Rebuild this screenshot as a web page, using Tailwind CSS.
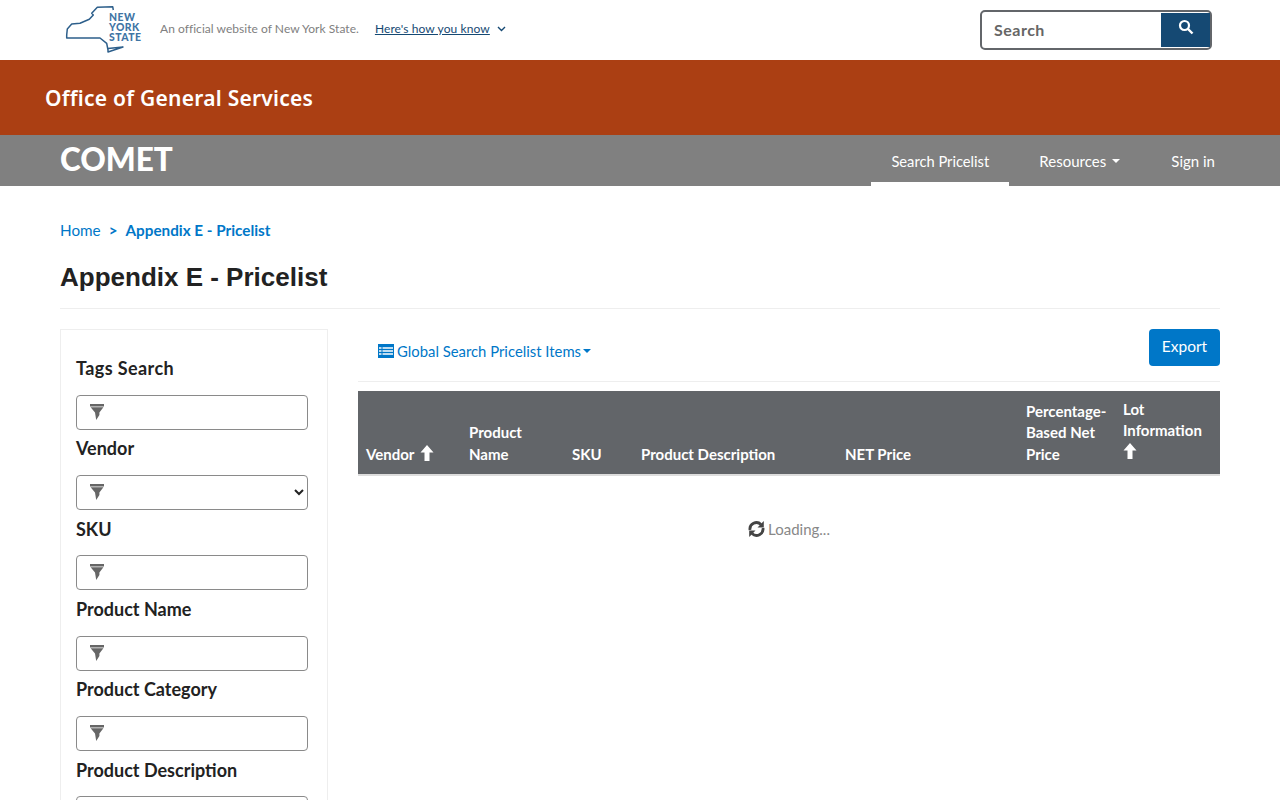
<!DOCTYPE html>
<html lang="en">
<head>
<meta charset="utf-8">
<title>Appendix E - Pricelist</title>
<script src="https://cdn.jsdelivr.net/npm/@tailwindcss/browser@4"></script>
</head>
<body class="bg-white font-['Lato',sans-serif] text-[#222]">
<div class="h-[800px] overflow-hidden">
  <!-- Universal header -->
  <div class="h-[60px] px-[60px] flex items-center justify-between">
    <div class="flex items-center">
      <svg class="w-[90px] h-[60px]" viewBox="0 0 90 60" fill="none">
        <path d="M6.7 35 L7.3 29 L11.7 24 L20 23.3 L29.3 19.3 L33.3 15 L31.7 13.3 L37.3 7.3 L52.7 6.7 L53.3 10 M6.7 35 L6.7 38 L40 38 L46.7 43.3 L48 50 M48 52 L63 47 L48 48.5 Z" stroke="#2d5f8b" stroke-width="1.5" stroke-linejoin="round"/>
        <g fill="#3f75a5" font-family="Lato" font-weight="900" font-size="10.4" letter-spacing="0.5">
          <text x="49" y="20.5">NEW</text>
          <text x="49" y="30.5">YORK</text>
          <text x="49" y="40.5">STATE</text>
        </g>
      </svg>
      <span class="ml-[10px] -mt-[2px] text-[12px] tracking-[0.04px] text-[#808080]">An official website of New York State.</span>
      <a class="ml-[16px] -mt-[2px] text-[12px] tracking-[0.1px] text-[#154973] underline">Here's how you know </a>
      <svg class="ml-[7px] -mt-[2px] w-[9px] h-[6px]" viewBox="0 0 9 6" fill="none"><path d="M1 1 L4.5 4.5 L8 1" stroke="#154973" stroke-width="1.4"/></svg>
    </div>
    <div class="mr-[8px] w-[232px] h-[40px] border-2 border-[#63666a] rounded-[5px] flex items-center justify-between pl-[12px] pr-0">
      <span class="text-[16px] font-bold tracking-[0.5px] text-[#666]">Search</span>
      <button class="w-[49px] h-[34px] bg-[#154973] flex items-start justify-center pt-[6px]">
        <svg class="w-[16px] h-[16px]" viewBox="0 0 16 16" fill="none"><circle cx="6.5" cy="6.5" r="4.5" stroke="white" stroke-width="2.2"/><path d="M10 10 L14.5 14.5" stroke="white" stroke-width="2.4"/></svg>
      </button>
    </div>
  </div>
  <!-- Agency bar -->
  <div class="h-[75px] bg-[#ab3f13] flex items-center pl-[45px] pt-[2px]">
    <span class="font-['Noto_Sans',sans-serif] font-semibold text-[21px] tracking-[0.25px] text-white">Office of General Services</span>
  </div>
  <!-- App nav -->
  <div class="h-[51px] bg-[#808080] px-[60px] flex justify-between text-white">
    <a class="text-[31.5px] leading-[49px] font-black">COMET</a>
    <nav class="flex -mr-[15px] text-[15px] leading-[24px]">
      <a class="w-[138px] text-center h-[51px] pt-[14px] border-b-4 border-white text-[14.7px]">Search Pricelist</a>
      <a class="w-[122px] ml-[10px] pl-[20px] pt-[14px] flex items-start gap-[6px]">Resources <span class="mt-[10px] border-x-4 border-t-4 border-x-transparent border-t-white"></span></a>
      <a class="ml-[10px] px-[20px] pt-[14px]">Sign in</a>
    </nav>
  </div>
  <!-- Main -->
  <main class="px-[60px]">
    <div class="pt-[34px] h-[68px] flex text-[15.25px] text-[#0077c8] leading-[21px]">
      <a>Home</a><b class="mx-[8px]">&gt;</b><b>Appendix E - Pricelist</b>
    </div>
    <h1 class="font-['Liberation_Sans',sans-serif] font-bold text-[26px] leading-[40px] pt-[3px] text-[#222] h-[55px] border-b border-[#eee]">Appendix E - Pricelist</h1>
    <div class="mt-[20px] flex gap-[30px]">
      <!-- Filter sidebar -->
      <aside class="w-[268px] shrink-0 border border-[#eee] pt-[20px] px-[15px] flex flex-col">
        <div class="h-[80.2px]">
          <div class="h-[45px] pt-[5px] text-[18px] leading-[26px] font-bold tracking-[0.4px] text-[#222]">Tags Search</div>
          <div class="relative">
            <input class="block w-[232px] h-[35px] border border-[#8a8a8a] rounded-[4px] bg-white">
            <svg class="absolute left-[14px] top-[9px] w-[14px] h-[16px]" viewBox="0 0 14 16"><path d="M0 0H14V2.4H0Z M0.6 3.2H13.4L9.4 8.6V11L6.2 16L5 8.6Z" fill="#666"/></svg>
          </div>
        </div>
        <div class="h-[80.2px]">
          <div class="h-[45px] pt-[5px] text-[18px] leading-[26px] font-bold text-[#222]">Vendor</div>
          <div class="relative">
            <select class="block w-[232px] h-[35px] border border-[#8a8a8a] rounded-[4px] bg-white"></select>
            <svg class="absolute left-[14px] top-[9px] w-[14px] h-[16px]" viewBox="0 0 14 16"><path d="M0 0H14V2.4H0Z M0.6 3.2H13.4L9.4 8.6V11L6.2 16L5 8.6Z" fill="#666"/></svg>
          </div>
        </div>
        <div class="h-[80.2px]">
          <div class="h-[45px] pt-[6px] text-[18px] leading-[26px] font-bold text-[#222]">SKU</div>
          <div class="relative">
            <input class="block w-[232px] h-[35px] border border-[#8a8a8a] rounded-[4px] bg-white">
            <svg class="absolute left-[14px] top-[9px] w-[14px] h-[16px]" viewBox="0 0 14 16"><path d="M0 0H14V2.4H0Z M0.6 3.2H13.4L9.4 8.6V11L6.2 16L5 8.6Z" fill="#666"/></svg>
          </div>
        </div>
        <div class="h-[80.2px]">
          <div class="h-[45px] pt-[5px] text-[18px] leading-[26px] font-bold text-[#222]">Product Name</div>
          <div class="relative">
            <input class="block w-[232px] h-[35px] border border-[#8a8a8a] rounded-[4px] bg-white">
            <svg class="absolute left-[14px] top-[9px] w-[14px] h-[16px]" viewBox="0 0 14 16"><path d="M0 0H14V2.4H0Z M0.6 3.2H13.4L9.4 8.6V11L6.2 16L5 8.6Z" fill="#666"/></svg>
          </div>
        </div>
        <div class="h-[80.2px]">
          <div class="h-[45px] pt-[5px] text-[18px] leading-[26px] font-bold text-[#222]">Product Category</div>
          <div class="relative">
            <input class="block w-[232px] h-[35px] border border-[#8a8a8a] rounded-[4px] bg-white">
            <svg class="absolute left-[14px] top-[9px] w-[14px] h-[16px]" viewBox="0 0 14 16"><path d="M0 0H14V2.4H0Z M0.6 3.2H13.4L9.4 8.6V11L6.2 16L5 8.6Z" fill="#666"/></svg>
          </div>
        </div>
        <div class="h-[80.2px]">
          <div class="h-[45px] pt-[6px] text-[18px] leading-[26px] font-bold text-[#222]">Product Description</div>
          <div class="relative">
            <input class="block w-[232px] h-[35px] border border-[#8a8a8a] rounded-[4px] bg-white">
            <svg class="absolute left-[14px] top-[9px] w-[14px] h-[16px]" viewBox="0 0 14 16"><path d="M0 0H14V2.4H0Z M0.6 3.2H13.4L9.4 8.6V11L6.2 16L5 8.6Z" fill="#666"/></svg>
          </div>
        </div>
      </aside>
      <!-- Results -->
      <section class="flex-1 min-w-0">
        <div class="h-[53px] flex justify-between items-start border-b border-[#eee]">
          <a class="ml-[20px] mt-[12px] flex items-center text-[14.85px] leading-[20px] text-[#0077c8]">
            <svg class="w-[16px] h-[14px] mr-[3px]" viewBox="0 0 16 14" fill="#0077c8"><path d="M0 0H16V14H0Z M4.5 3.2V4.8H15V3.2Z M4.5 6.2V7.8H15V6.2Z M4.5 9.2V10.8H15V9.2Z M1 3.2V4.8H3.5V3.2Z M1 6.2V7.8H3.5V6.2Z M1 9.2V10.8H3.5V9.2Z" fill-rule="evenodd"/></svg>
            Global Search Pricelist Items<span class="ml-[2px] border-x-4 border-t-4 border-x-transparent border-t-[#0077c8]"></span>
          </a>
          <button class="w-[71px] h-[37px] pb-[2px] bg-[#0077c8] text-white text-[15.5px] rounded-[4px]">Export</button>
        </div>
        <div class="mt-[9px] h-[85px] border-b-2 border-[#ddd] bg-[#626569] text-white text-[15px] leading-[21.5px] font-bold grid grid-cols-[103px_103px_69px_204px_181px_97px_105px] items-end">
          <div class="px-[8px] pb-[9px]">Vendor <svg class="inline ml-[2px] w-[14px] h-[16px] align-[-1px]" viewBox="0 0 14 16" fill="white"><path d="M7 0 L13.5 7.5 H9.5 V16 H4.5 V7.5 H0.5 Z"/></svg></div>
          <div class="px-[8px] pb-[9px]">Product Name</div>
          <div class="px-[8px] pb-[9px]">SKU</div>
          <div class="px-[8px] pb-[9px]">Product Description</div>
          <div class="px-[8px] pb-[9px]">NET Price</div>
          <div class="px-[8px] pb-[9px]">Percentage-Based Net Price</div>
          <div class="px-[8px] pb-[11px]">Lot Information <svg class="inline w-[14px] h-[16px] align-[-1px]" viewBox="0 0 14 16" fill="white"><path d="M7 0 L13.5 7.5 H9.5 V16 H4.5 V7.5 H0.5 Z"/></svg></div>
        </div>
        <div class="mt-[41px] flex justify-center items-center text-[15px] leading-[24px] text-[#888]">
          <svg class="w-[17px] h-[18px] mr-[3px]" viewBox="0 0 17 18" fill="none" stroke="#444" stroke-width="2.8"><path d="M2 10 A6.5 6.5 0 0 1 13 4.5"/><path d="M15 8 A6.5 6.5 0 0 1 4 13.5"/><path d="M15.8 1 V7.5 H9.5 Z" fill="#444" stroke="none"/><path d="M1.2 17 V10.5 H7.5 Z" fill="#444" stroke="none"/></svg>
          Loading...
        </div>
      </section>
    </div>
  </main>
</div>
</body>
</html>
